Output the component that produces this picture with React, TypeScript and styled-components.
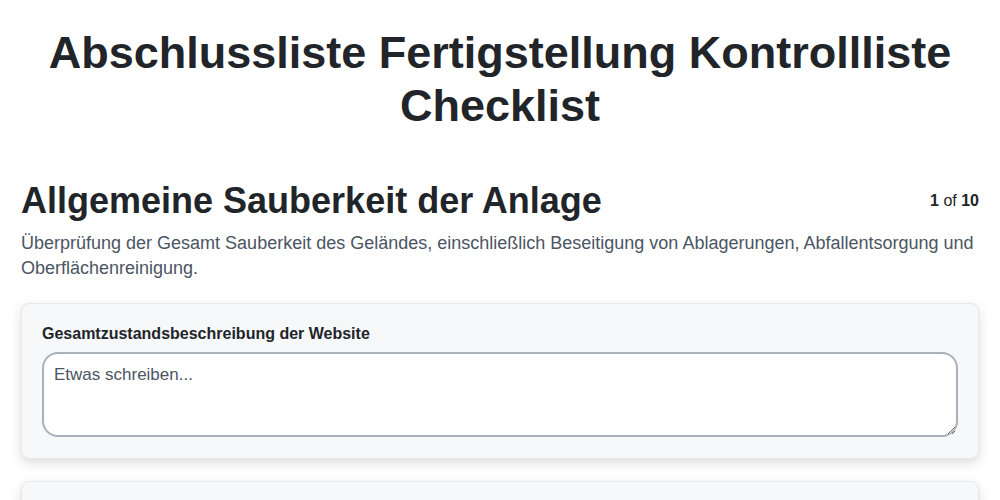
import React from 'react';
import styled, { createGlobalStyle } from 'styled-components';

const GlobalStyle = createGlobalStyle`
  * { box-sizing: border-box; }
  body {
    margin: 0;
    background: #fff;
    font-family: "Liberation Sans", Arial, sans-serif;
    color: #212529;
  }
`;

const Page = styled.main`
  padding: 0 21px;
`;

const Title = styled.h1`
  margin: 26px 0 0;
  font-size: 45px;
  line-height: 53px;
  font-weight: 700;
  text-align: center;
  color: #212529;
`;

const SectionHeader = styled.div`
  display: flex;
  align-items: flex-start;
  justify-content: space-between;
  margin-top: 47px;
`;

const SectionTitle = styled.h2`
  margin: 0;
  font-size: 36px;
  line-height: 43px;
  font-weight: 700;
  color: #212529;
`;

const Counter = styled.div`
  font-size: 16px;
  line-height: 20px;
  padding-top: 12px;
  color: #212529;
  b { font-weight: 700; }
`;

const Description = styled.p`
  margin: 9px 0 0;
  font-size: 18px;
  line-height: 25px;
  color: #4b5563;
`;

const Card = styled.section`
  margin-top: 22px;
  padding: 20px 20px 21px;
  background: #f7f8fa;
  border: 1px solid #e6e8eb;
  border-radius: 8px;
  box-shadow: 0 4px 12px rgba(0, 0, 0, 0.14);
`;

const Label = styled.label`
  display: block;
  font-size: 16px;
  line-height: 20px;
  font-weight: 700;
  color: #212529;
  margin-bottom: 8px;
`;

const TextArea = styled.textarea`
  display: block;
  width: 100%;
  height: 85px;
  padding: 10px 10px;
  border: 2px solid #a9b0b8;
  border-radius: 16px;
  background: #fff;
  font-family: "Liberation Sans", Arial, sans-serif;
  font-size: 17px;
  line-height: 22px;
  color: #212529;
  outline: none;
  &::placeholder { color: #4b5563; }
`;

export default function App() {
  return (
    <>
      <GlobalStyle />
      <Page>
        <Title>Abschlussliste Fertigstellung Kontrollliste Checklist</Title>
        <SectionHeader>
          <SectionTitle>Allgemeine Sauberkeit der Anlage</SectionTitle>
          <Counter><b>1</b> of <b>10</b></Counter>
        </SectionHeader>
        <Description>
          Überprüfung der Gesamt Sauberkeit des Geländes, einschließlich Beseitigung von Ablagerungen, Abfallentsorgung und Oberflächenreinigung.
        </Description>
        <Card>
          <Label htmlFor="overall">Gesamtzustandsbeschreibung der Website</Label>
          <TextArea id="overall" placeholder="Etwas schreiben..." />
        </Card>
        <Card>
          <Label htmlFor="debris">Ablagerungen entfernt</Label>
          <TextArea id="debris" placeholder="Etwas schreiben..." />
        </Card>
      </Page>
    </>
  );
}
